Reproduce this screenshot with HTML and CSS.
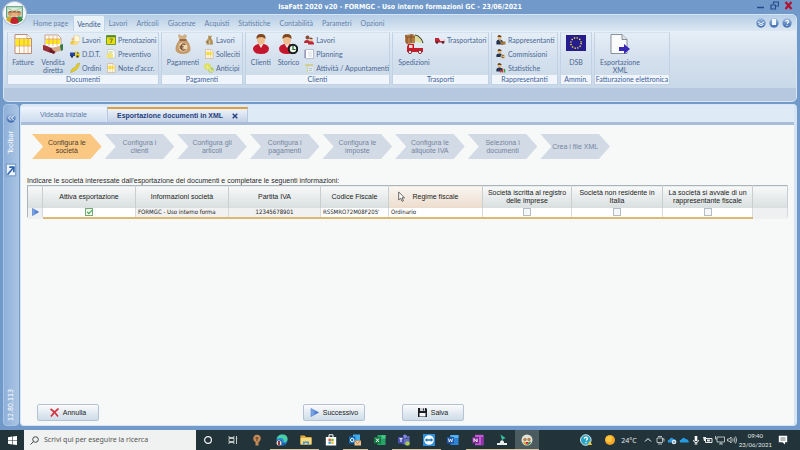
FILE: index.html
```
<!DOCTYPE html>
<html lang="it">
<head>
<meta charset="utf-8">
<title>IsaFatt 2020</title>
<link rel="stylesheet" href="styles.css">
</head>
<body>
<svg class="defs" aria-hidden="true">
  <linearGradient id="gb" x1="0" y1="0" x2="0" y2="1"><stop offset="0" stop-color="#9dbbe2"/><stop offset="1" stop-color="#3c68ad"/></linearGradient>
  <linearGradient id="gp" x1="0" y1="0" x2="1" y2="0"><stop offset="0" stop-color="#8db4f0"/><stop offset="1" stop-color="#2c5fc4"/></linearGradient>
  <symbol id="sheet" viewBox="0 0 18 20"><path d="M1 .5h12l4.500 4V19.500H1z" fill="#fffdf2" stroke="#c08a78"/><path d="M1.500 5h15v7h-15z" fill="#ffe81c"/><path d="M1 4.500h16M1 12h16M5.500 4v15.500M10 4v15.500M14 4v15.500" stroke="#d79b7c" stroke-width=".7"/><path d="M13 .5v4h4.500" fill="#fff" stroke="#b58080" stroke-width=".7"/></symbol>
  <symbol id="hands" viewBox="0 0 20 20"><path d="M2 1h13l3 3v10H2z" fill="#fffdf2" stroke="#c08a78" stroke-width=".8"/><path d="M3 5h14v5H3z" fill="#ffe81c"/><path d="M2 5h16M6 2v10M10 2v10M14 2v10" stroke="#d79b7c" stroke-width=".7"/><path d="M0 11l4 1 4 2 6 3-3 2.500-6-1.500-5-2z" fill="#982f38"/><path d="M20 11l-4 1-6 2-1 2 4 2 7-2z" fill="#d9ac88"/><path d="M17 11l3-1v6l-2 1z" fill="#2d7c41"/><path d="M7 14l5 4-1 2-5-2z" fill="#6d1c24"/></symbol>
  <symbol id="note" viewBox="0 0 10 10"><path d="M1.500 .5h5.500L9 2.500V9.500H1.500z" fill="#fff9df" stroke="#c7a887" stroke-width=".6"/><path d="M2 3h6.500v3H2z" fill="#ffe744"/><path d="M4 1v8M6.500 1v8" stroke="#dba989" stroke-width=".4"/></symbol>
  <symbol id="work" viewBox="0 0 10 10"><path d="M4 0h3.500L10 2.500V7H4z" fill="#fff8d5" stroke="#d9b68a" stroke-width=".6"/><circle cx="3" cy="4" r="1.500" fill="#e9bd8a"/><path d="M.5 9.500V7q2-2.500 5 0v2.500z" fill="#edc438"/><path d="M3 7h5v2.500H3z" fill="#f6db70"/></symbol>
  <symbol id="cal" viewBox="0 0 10 10"><path d="M.5 .5h9v9h-9z" fill="#e9dd13" stroke="#719c30"/><path d="M.5 1.500h9" stroke="#498642" stroke-width="1.500"/><path d="M3.500 4h3L4.500 8" fill="none" stroke="#6e7e1c"/></symbol>
  <symbol id="van" viewBox="0 0 10 10"><path d="M0 3.500h5V7H0z" fill="#2543a4"/><path d="M5 2.500h3L10 5v2.500H5z" fill="#ead224"/><path d="M7 3h1l1.300 1.700H7z" fill="#6679a4"/><circle cx="2" cy="7.500" r="1.200" fill="#222d53"/><circle cx="7.500" cy="7.500" r="1.200" fill="#47451c"/></symbol>
  <symbol id="quote" viewBox="0 0 10 10"><path d="M2 .5h4.500L9 2.500V9H2z" fill="#fff" stroke="#b5b8a6" stroke-width=".6"/><path d="M0 6l4-2.500 3 1.500v4H1z" fill="#f2e27a"/><path d="M3 3h4" stroke="#b3c977"/></symbol>
  <symbol id="pen" viewBox="0 0 10 10"><path d="M.5 9.500L2 6q4-1 5-5l2.500-1L9 3Q7 8 .5 9.500z" fill="#e9cf22" stroke="#b39d20" stroke-width=".5"/></symbol>
  <symbol id="bag" viewBox="0 0 16 20"><path d="M4 0l3 2 3-2 2 2-2 4H5L3 2z" fill="#d0af83"/><path d="M5 5h6q5 6 4.500 11Q14 20 8 20T.5 16Q0 11 5 5z" fill="#c59b6c"/><path d="M4.500 6h7" stroke="#8a5a3c" stroke-width="1.500"/><circle cx="8" cy="13" r="4.500" fill="#ecd8ad"/><path d="M10.500 10.500q-4-2-4.500 2.500t4.500 2.500M4.500 12.200h4M4.500 14h4" fill="none" stroke="#713e2b" stroke-width="1.100"/></symbol>
  <symbol id="bagS" viewBox="0 0 10 10"><path d="M4 .5l2 .5L8 .5 7 3Q9.500 6 9 9.500H2.500Q1.500 6 4.500 3z" fill="#b08c51"/><circle cx="4" cy="7" r="2.500" fill="#d3c18f"/><path d="M5 6H3v2h2" fill="none" stroke="#644427" stroke-width=".7"/></symbol>
  <symbol id="coin" viewBox="0 0 10 10"><circle cx="3.500" cy="3.500" r="3.300" fill="#dbdf59"/><circle cx="7" cy="7" r="2.700" fill="#b4ce62"/><path d="M3 2v3h3v3h3" fill="none" stroke="#f7f2aa"/></symbol>
  <symbol id="person" viewBox="0 0 18 20"><path d="M1 14q1-3 5-4h6q4 1 5 4 0 6-8 6T1 14z" fill="#c4162c"/><path d="M6 9h6l-3 5z" fill="#f8eee6"/><ellipse cx="9" cy="6" rx="4" ry="5" fill="#edbd8d"/><path d="M4.500 5Q4 0 9 0t4.500 5q-2-2-4.500-2T4.500 5z" fill="#80451d"/></symbol>
  <symbol id="clock" viewBox="0 0 20 20"><use href="#person" width="18" height="20"/><circle cx="15" cy="15" r="4.200" fill="#edf4e7" stroke="#151a1b" stroke-width="2"/><path d="M15 12v3.500h2.500" fill="none" stroke="#25672d" stroke-width="1.200"/></symbol>
  <symbol id="people" viewBox="0 0 10 10"><path d="M0 8q0-3 3-3t3 3zM4 9.500q0-3.500 3-3.500t3 3.500z" fill="#bd2535"/><circle cx="3.500" cy="2.500" r="2" fill="#8c4b37"/><circle cx="7" cy="4.700" r="1.800" fill="#e8bc91"/><path d="M5 4q2-3 4 0z" fill="#74402a"/></symbol>
  <symbol id="plan" viewBox="0 0 10 10"><path d="M1.500 .5h8v9h-8z" fill="#fff" stroke="#9daabd" stroke-width=".7"/><path d="M1 1.500v8" stroke="#584c91" stroke-width="1.300" stroke-dasharray="1 1"/><path d="M4 3h4M4 5h4M4 7h4" stroke="#b6c1ce" stroke-width=".6"/></symbol>
  <symbol id="task" viewBox="0 0 10 10"><path d="M1 1h8v2H4v6H3V3H1z" fill="#cfcf98"/><path d="M4 4h5v5H4z" fill="#e1e9ed"/><path d="M5 5.500h3M5 7.500h3" stroke="#9ab4b5" stroke-width=".7"/></symbol>
  <symbol id="crate" viewBox="0 0 20 20"><path d="M1 1l8-1 2 2v7l-8 1-2-2z" fill="#b57b42"/><path d="M1 1l2 2h8M3 3v7M7 0v9" fill="none" stroke="#694226" stroke-width=".7"/><path d="M11 1l3 1q4 3 5 7" fill="none" stroke="#494a29" stroke-width="1.100"/><path d="M11 2l3 1q3 2 4 5l-2 1-5-2z" fill="#dedd98"/><path d="M4 10h6v4h9v4H3v-5z" fill="#c51c2b"/><path d="M5 11h3.500v3H5z" fill="#f8dddd"/><circle cx="6" cy="18" r="1.600" fill="#fff" stroke="#8d3038"/><circle cx="16" cy="18" r="1.600" fill="#fff" stroke="#8d3038"/></symbol>
  <symbol id="truck" viewBox="0 0 10 10"><path d="M0 3h4v1.500h5.500V7.500H0z" fill="#be2635"/><path d="M5 4h4.500v2H5z" fill="#f5dfdf"/><circle cx="2" cy="7.500" r="1.200" fill="#54202c"/><circle cx="8" cy="7.500" r="1.200" fill="#54202c"/></symbol>
  <symbol id="rep" viewBox="0 0 10 10"><circle cx="3.500" cy="2.500" r="2" fill="#e1b77b"/><path d="M1.500 2Q2-.5 4 .3T5.500 2z" fill="#654321"/><path d="M.5 9.500q-1-5 3-5t4 5z" fill="#26334e"/><path d="M3 4.500h1.500v3z" fill="#f2dd83"/><path d="M4.500 6.500h5v3h-5z" fill="#a5733a"/></symbol>
  <symbol id="repc" viewBox="0 0 10 10"><circle cx="3.500" cy="2.500" r="2" fill="#e1b77b"/><path d="M1.500 2Q2-.5 4 .3T5.500 2z" fill="#654321"/><path d="M.5 8q-1-3.500 3-3.500t3 3.500z" fill="#26334e"/><circle cx="7" cy="7.500" r="2.400" fill="#d6c29e"/><path d="M8 6.500H6v2h2" fill="none" stroke="#7c502b" stroke-width=".7"/></symbol>
  <symbol id="reps" viewBox="0 0 10 10"><circle cx="3.500" cy="2.500" r="2" fill="#e1b77b"/><path d="M1.500 2Q2-.5 4 .3T5.500 2z" fill="#654321"/><path d="M.5 8.500q-1-4 3-4t3 4z" fill="#26334e"/><path d="M4.500 9.500V7M6.500 9.500V5.500" stroke="#d13530" stroke-width="1.300"/><path d="M8.500 9.500V6" stroke="#2fa33b" stroke-width="1.500"/></symbol>
  <symbol id="eu" viewBox="0 0 20 20"><path d="M0 1h20v16H0z" fill="#251c8d"/><circle cx="10" cy="9" r="5.200" fill="none" stroke="#f4dc3b" stroke-width="1.500" stroke-dasharray="1.300 1.420"/></symbol>
  <symbol id="export" viewBox="0 0 20 20"><path d="M1 .5h11l5 5V19.500H1z" fill="#fafbfc" stroke="#70777f" stroke-width=".8"/><path d="M12 .5v5h5" fill="#dce2e6" stroke="#70777f" stroke-width=".8"/><path d="M9 13h5v-3l6 5-6 5v-3H9z" fill="#3728b5"/></symbol>
</svg>

<div class="app">
  <header class="titlebar">
    <h1>IsaFatt 2020 v20 - FORMGC - Uso interno formazioni GC - 23/06/2021</h1>
    <div class="winbtns">
      <button aria-label="Riduci a icona"><svg viewBox="0 0 9 9"><path d="M1 6.500h7" stroke="#264a8a" stroke-width="1.500"/></svg></button>
      <button aria-label="Ripristina"><svg viewBox="0 0 9 9"><path d="M3.500 3V1h5v4H6.500M1 4h4.500v4H1z" fill="none" stroke="#264a8a" stroke-width="1.200"/></svg></button>
      <button aria-label="Chiudi"><svg viewBox="0 0 9 9"><path d="M1.500 1l6 7M7.500 1l-6 7" stroke="#b3122f" stroke-width="2.200"/></svg></button>
    </div>
  </header>
  <button class="logo" aria-label="Menu applicazione"><svg viewBox="0 0 24 24"><circle cx="12" cy="12" r="11.500" fill="#f5f8fb" stroke="#aebfce"/><path d="M4.500 5.500h15v10h-15z" fill="#d9eedc" stroke="#489374"/><path d="M6 7l5 3 7-3" fill="none" stroke="#a6cba0"/><circle cx="8" cy="12" r="2.400" fill="#d69a68"/><circle cx="16" cy="12" r="2.400" fill="#d69a68"/><circle cx="12" cy="12" r="2.800" fill="#e6b17d"/><path d="M5.500 11q2.500-3 5 0M13.500 11q2.500-3 5 0M9 11q3-3 6 0" fill="#8b5a3c"/><path d="M4 18q1-4 5-3l2 6q-5 0-7-3z" fill="#d4a928"/><path d="M20 18q-1-4-5-3l-2 6q5 0 7-3z" fill="#388a42"/><path d="M8 21q0-6 4-6t4 6q-4 2-8 0z" fill="#c1222c"/></svg></button>

  <section class="ribbon">
    <nav class="menu">
      <a href="#">Home page</a><a href="#" class="on">Vendite</a><a href="#">Lavori</a><a href="#">Articoli</a><a href="#">Giacenze</a><a href="#">Acquisti</a><a href="#">Statistiche</a><a href="#">Contabilità</a><a href="#">Parametri</a><a href="#">Opzioni</a>
      <div class="helpers">
        <button aria-label="Stile"><svg viewBox="0 0 10 10"><circle cx="5" cy="5" r="4.700" fill="url(#gb)"/><path d="M2 4l3 2 3-2M2.500 6.500q2.500 2 5 0" fill="none" stroke="#fff"/></svg></button>
        <button aria-label="Finestra"><svg viewBox="0 0 10 10"><circle cx="5" cy="5" r="4.700" fill="url(#gb)"/><path d="M3 1h4v6H3z" fill="#f2f7fc"/></svg></button>
        <button aria-label="Aiuto"><svg viewBox="0 0 10 10"><circle cx="5" cy="5" r="4.700" fill="url(#gb)"/><path d="M3.500 3.500Q5 1.500 6.500 3.300 6.500 4.500 5 5.500M5 7v1" fill="none" stroke="#fff" stroke-width="1.200"/></svg></button>
      </div>
    </nav>
    <div class="groups">
      <section class="group g-doc">
        <div class="tools">
          <button class="big"><svg><use href="#sheet"/></svg>Fatture</button>
          <button class="big"><svg><use href="#hands"/></svg>Vendita diretta</button>
          <div class="list narrow">
            <button><svg><use href="#work"/></svg>Lavori</button>
            <button><svg><use href="#van"/></svg>D.D.T.</button>
            <button><svg><use href="#pen"/></svg>Ordini</button>
          </div>
          <div class="list">
            <button><svg><use href="#cal"/></svg>Prenotazioni</button>
            <button><svg><use href="#quote"/></svg>Preventivo</button>
            <button><svg><use href="#note"/></svg>Note d'accr.</button>
          </div>
        </div>
        <h2>Documenti</h2>
      </section>
      <section class="group g-pag">
        <div class="tools">
          <button class="big wide"><svg><use href="#bag"/></svg>Pagamenti</button>
          <div class="list">
            <button><svg><use href="#bagS"/></svg>Lavori</button>
            <button><svg><use href="#note"/></svg>Solleciti</button>
            <button><svg><use href="#coin"/></svg>Anticipi</button>
          </div>
        </div>
        <h2>Pagamenti</h2>
      </section>
      <section class="group g-cli">
        <div class="tools">
          <button class="big"><svg><use href="#person"/></svg>Clienti</button>
          <button class="big"><svg><use href="#clock"/></svg>Storico</button>
          <div class="list">
            <button><svg><use href="#people"/></svg>Lavori</button>
            <button><svg><use href="#plan"/></svg>Planning</button>
            <button><svg><use href="#task"/></svg>Attività / Appuntamenti</button>
          </div>
        </div>
        <h2>Clienti</h2>
      </section>
      <section class="group g-tra">
        <div class="tools">
          <button class="big wide"><svg><use href="#crate"/></svg>Spedizioni</button>
          <div class="list">
            <button><svg><use href="#truck"/></svg>Trasportatori</button>
          </div>
        </div>
        <h2>Trasporti</h2>
      </section>
      <section class="group g-rap">
        <div class="tools">
          <div class="list">
            <button><svg><use href="#rep"/></svg>Rappresentanti</button>
            <button><svg><use href="#repc"/></svg>Commissioni</button>
            <button><svg><use href="#reps"/></svg>Statistiche</button>
          </div>
        </div>
        <h2>Rappresentanti</h2>
      </section>
      <section class="group g-amm">
        <div class="tools">
          <button class="big"><svg><use href="#eu"/></svg>DSB</button>
        </div>
        <h2>Ammin.</h2>
      </section>
      <section class="group g-fat">
        <div class="tools">
          <button class="big xwide"><svg><use href="#export"/></svg>Esportazione XML</button>
        </div>
        <h2>Fatturazione elettronica</h2>
      </section>
    </div>
  </section>

  <div class="workspace">
    <aside class="side">
      <button aria-label="Espandi"><svg viewBox="0 0 10 10"><circle cx="5" cy="5" r="4.700" fill="url(#gb)"/><path d="M5 2.500L2.500 5 5 7.500M8 2.500L5.500 5 8 7.500" fill="none" stroke="#fff"/></svg></button>
      <span class="vert">Toolbar</span>
      <button class="pin" aria-label="Sgancia"><svg viewBox="0 0 10 12"><path d="M1 1h8v10H1z" fill="#eef5fc" stroke="#7ca0cc"/><path d="M2 10l5-6M3.500 3.500H7.500V8" fill="none" stroke="#2f66ac" stroke-width="1.400"/></svg></button>
      <span class="vert version">12.80.113</span>
    </aside>
    <main>
      <div class="tabs">
        <button>Videata iniziale</button>
        <button class="on">Esportazione documenti in XML <svg viewBox="0 0 6 6"><path d="M.7 .7l4.600 4.600M5.300 .7L.7 5.300" stroke="#263f7c" stroke-width="1.400"/></svg></button>
      </div>
      <div class="page">
        <ol class="steps">
          <li class="on">Configura le società</li>
          <li>Configura i clienti</li>
          <li>Configura gli articoli</li>
          <li>Configura i pagamenti</li>
          <li>Configura le imposte</li>
          <li>Configura le aliquote IVA</li>
          <li>Seleziona i documenti</li>
          <li>Crea i file XML</li>
        </ol>
        <p>Indicare le società interessate dall'esportazione dei documenti e completare le seguenti informazioni:</p>
        <table>
          <colgroup><col class="c-mark"><col class="c-act"><col class="c-info"><col class="c-iva"><col class="c-cf"><col class="c-reg"><col class="c-imp"><col class="c-res"><col class="c-rap"><col class="c-end"></colgroup>
          <thead>
            <tr>
              <th></th><th>Attiva esportazione</th><th>Informazioni società</th><th>Partita IVA</th><th>Codice Fiscale</th>
              <th class="hot">Regime fiscale<svg class="cursor" viewBox="0 0 7 11"><path d="M.7 1v8l2-1.800L4 10.300l1.400-.6L4 6.800h2.500z" fill="#fff" stroke="#444" stroke-width=".8"/></svg></th>
              <th>Società iscritta al registro delle imprese</th><th>Società non residente in Italia</th><th>La società si avvale di un rappresentante fiscale</th><th></th>
            </tr>
          </thead>
          <tbody>
            <tr>
              <td class="mark"><svg viewBox="0 0 7 8"><path d="M.5 .5L6.500 4l-6 3.500z" fill="url(#gp)" stroke="#3e6cc2" stroke-width=".6"/></svg></td>
              <td><input type="checkbox" checked aria-label="Attiva esportazione"></td>
              <td class="grey left">FORMGC - Uso interno forma</td>
              <td class="grey">12345678901</td>
              <td class="left">RSSMRO72M08F205'</td>
              <td class="left">Ordinario</td>
              <td><input type="checkbox" aria-label="Iscritta al registro delle imprese"></td>
              <td><input type="checkbox" aria-label="Non residente in Italia"></td>
              <td><input type="checkbox" aria-label="Rappresentante fiscale"></td>
              <td class="end"></td>
            </tr>
          </tbody>
        </table>
        <div class="actions">
          <button><svg viewBox="0 0 9 9"><path d="M.5 1Q4 3 8 8.500M8.500 .5Q4 4 1 8.500" fill="none" stroke="#d2303f" stroke-width="1.600"/></svg>Annulla</button>
          <button class="next"><svg viewBox="0 0 9 9"><path d="M1 .5L8.500 4.500 1 8.500z" fill="url(#gp)" stroke="#4a76c6" stroke-width=".6"/></svg>Successivo</button>
          <button class="save"><svg viewBox="0 0 9 9"><path d="M0 0h8l1 1v8H0z" fill="#1b1d20"/><path d="M2 0h5v3H2z" fill="#cfd4d8"/><path d="M1.500 5h6v3.500h-6z" fill="#f4f5f6"/><path d="M5 .5h1v2H5z" fill="#222"/></svg>Salva</button>
        </div>
      </div>
    </main>
  </div>
</div>

<footer class="taskbar">
  <button class="start" aria-label="Start"><svg viewBox="0 0 9 9"><path d="M0 1.200l4-.6v3.600H0zM4.600 .5L9 0v4.200H4.600zM0 4.800h4v3.600l-4-.6zM4.600 4.800H9V9l-4.400-.5z" fill="#fff"/></svg></button>
  <label class="search"><svg viewBox="0 0 9 9"><circle cx="5.500" cy="3.500" r="2.800" fill="none" stroke="#444"/><path d="M3.500 5.500L.6 8.500" stroke="#444"/></svg><input type="text" placeholder="Scrivi qui per eseguire la ricerca" aria-label="Ricerca"></label>
  <div class="apps">
    <button aria-label="Cortana"><svg viewBox="0 0 12 12"><circle cx="6" cy="6" r="3.400" fill="none" stroke="#eef2f2" stroke-width="1.200"/></svg></button>
    <button aria-label="Visualizzazione attività"><svg viewBox="0 0 12 12"><path d="M2 2v1.500h5V2M2 10V8.500h5V10M2 4.500h5v3H2zM9.500 2v8M8.800 4.500h1.500" fill="none" stroke="#cfd6d6" stroke-width=".9"/></svg></button>
    <button aria-label="Suggerimenti"><svg viewBox="0 0 12 12"><circle cx="6" cy="4.500" r="3.700" fill="#c28a58"/><path d="M4.500 7h3v4.500h-3z" fill="#c28a58"/><path d="M6 3v4M4.500 4h3" stroke="#684326" stroke-width="1.100"/></svg></button>
    <button class="run" aria-label="Edge"><svg viewBox="0 0 12 12"><circle cx="6" cy="6" r="5.500" fill="#2789d5"/><path d="M.5 6Q1 .5 6.500 .5T11.500 6q-1 2.500-4 2 1-4-3-4T.5 6z" fill="#48cfa2"/><path d="M5 6q-1 4 5 4.500" fill="none" stroke="#185b9b" stroke-width="1.500"/><circle cx="3" cy="9" r="2.500" fill="#e9d8d2"/><path d="M2 7h2v4H2z" fill="#9c3542"/></svg></button>
    <button class="run" aria-label="Esplora file"><svg viewBox="0 0 12 12"><path d="M.5 1.500h4L6 3h5.500v7.500H.5z" fill="#e2ad3c"/><path d="M.5 4h11v6.500H.5z" fill="#fad979"/><path d="M3 7.500h6v3H7.500V9h-3v1.500H3z" fill="#4993cf"/></svg></button>
    <button aria-label="Store"><svg viewBox="0 0 12 12"><path d="M4 3V.8h4V3" fill="none" stroke="#fff"/><path d="M.8 3h10.400v8.500H.8z" fill="#fff"/><path d="M3.500 4.700h2.300V7H3.500z" fill="#ea4a2c"/><path d="M6.300 4.700h2.300V7H6.300z" fill="#75b72a"/><path d="M3.500 7.500h2.300v2.300H3.500z" fill="#279fdd"/><path d="M6.300 7.500h2.300v2.300H6.300z" fill="#f6b815"/></svg></button>
    <button class="run" aria-label="Outlook"><svg viewBox="0 0 12 12"><path d="M4 .5h7v6H4z" fill="#42adec"/><path d="M0 2.500h6.500v7H0z" fill="#1169ba"/><circle cx="3.200" cy="6" r="1.700" fill="none" stroke="#fff"/><path d="M5.500 6.500H12v5H5.500z" fill="#f0c493"/><path d="M5.500 6.500l3.200 3 3.300-3" fill="none" stroke="#b06e37" stroke-width=".7"/></svg></button>
    <button aria-label="Excel"><svg viewBox="0 0 12 12"><path d="M3.500 1h8v10h-8z" fill="#27a365"/><path d="M7.500 1h4v3.500h-4z" fill="#45c487"/><path d="M0 3h7v6.500H0z" fill="#107a40"/><path d="M2 4.500l3 3.500M5 4.500L2 8" stroke="#fff"/></svg></button>
    <button class="run" aria-label="Teams"><svg viewBox="0 0 12 12"><circle cx="7" cy="2.500" r="2" fill="#8187dc"/><circle cx="10.300" cy="3.200" r="1.300" fill="#6c70c8"/><path d="M4 4.500h7.500V9Q8 13 4 9z" fill="#656bc6"/><path d="M0 3h6v6.500H0z" fill="#484fb1"/><path d="M1.500 4.700h3M3 4.700V8" stroke="#fff"/><circle cx="9.500" cy="9.500" r="2.300" fill="#a9c753"/></svg></button>
    <button class="run" aria-label="TeamViewer"><svg viewBox="0 0 12 12"><path d="M0 0h12v12H0z" fill="#2c91df"/><circle cx="6" cy="6" r="4.800" fill="#fff"/><path d="M1.800 6l2.500-2v1.200h3.400V4l2.500 2-2.500 2V6.800H4.300V8z" fill="#1a75c4"/></svg></button>
    <button aria-label="Word"><svg viewBox="0 0 12 12"><path d="M3.500 1h8v10h-8z" fill="#2f83d4"/><path d="M3.500 1h8v3h-8z" fill="#53b2ef"/><path d="M0 3h7v6.500H0z" fill="#1e57ae"/><path d="M1.300 4.500l1 3.500 1.200-3 1.200 3 1-3.500" fill="none" stroke="#fff" stroke-width=".8"/></svg></button>
    <button class="run" aria-label="OneNote"><svg viewBox="0 0 12 12"><path d="M3 .8h8.500v10.400H3z" fill="#c35ad5"/><path d="M9 3h2.500v8.200H9z" fill="#9332a6"/><path d="M0 3h7v6.500H0z" fill="#78288d"/><path d="M2 8V4.500L5 8V4.500" fill="none" stroke="#fff"/></svg></button>
    <button class="run" aria-label="Registratore"><svg viewBox="0 0 12 12"><path d="M4.500 .5L9.500 4 6 6z" fill="#31c3a4"/><path d="M4 7.500L6 6l2 1.500v1.500h3V11H1V9h3z" fill="#e8efee"/></svg></button>
    <button class="run active" aria-label="IsaFatt"><svg viewBox="0 0 12 12"><circle cx="6" cy="6" r="5.500" fill="#dfe5d8"/><circle cx="4" cy="5.500" r="1.700" fill="#b97e50"/><circle cx="8" cy="5.500" r="1.700" fill="#b97e50"/><path d="M2 8q2-2 4 3Q3 11 2 8z" fill="#cda928"/><path d="M10 8Q8 6 6 11q3 0 4-3z" fill="#3d8b44"/><path d="M4.500 8h3L6 11z" fill="#c32432"/></svg></button>
  </div>
  <div class="tray">
    <button class="t-help" aria-label="Guida"><svg viewBox="0 0 12 12"><circle cx="5.800" cy="6" r="5.300" fill="#28a3c3" stroke="#e9f4f6" stroke-width=".9"/><path d="M4 4.500Q6 2 7.500 4.300 7.500 5.500 6 6.500M6 8v1.300" fill="none" stroke="#fff" stroke-width="1.300"/><path d="M8 11l1-3.500h1.500L12 11z" fill="#e8c545"/></svg></button>
    <button class="weather"><svg viewBox="0 0 12 12"><circle cx="6" cy="6" r="5" fill="#f5a629"/><circle cx="5" cy="5" r="3.300" fill="#ffc640"/></svg>24°C</button>
    <div class="status">
      <button aria-label="Mostra icone nascoste"><svg viewBox="0 0 10 10"><path d="M2 6.500l3-3 3 3" fill="none" stroke="#fff"/></svg></button>
      <button aria-label="Riunione"><svg viewBox="0 0 10 10"><path d="M2 3h5.500v4.500H2zM3 1.500h4M3 9h4M7.500 4.500L9 3.500v3" fill="none" stroke="#d7dddd" stroke-width=".8"/></svg></button>
      <button aria-label="OneDrive personale"><svg viewBox="0 0 10 10"><path d="M1 7.500Q0 5 2.500 4.500 4 1.500 6.500 4 9.500 4 9.500 7.500z" fill="#2e9add"/><circle cx="7" cy="7" r="2.300" fill="#dce7ee"/><path d="M6 7h2" stroke="#286caa"/></svg></button>
      <button aria-label="OneDrive"><svg viewBox="0 0 10 10"><path d="M1 7.500Q0 5 2.500 4.500 4 1.500 6.500 4 9.800 4 9.800 7.500z" fill="#249de3"/></svg></button>
      <button aria-label="Microfono"><svg viewBox="0 0 10 10"><path d="M3.700 1h2.600v5H3.700z" fill="#fff"/><path d="M2.500 5q0 2.500 2.500 2.500T7.500 5M5 7v2M3.500 9h3" fill="none" stroke="#fff" stroke-width=".9"/></svg></button>
      <button aria-label="Batteria"><svg viewBox="0 0 10 10"><path d="M2.500 3.500H9v4H2.500z" fill="none" stroke="#e6eaea"/><path d="M4 4.500h3v2H4zM0 2h3v4H1z" fill="#e6eaea"/></svg></button>
      <button aria-label="Rete"><svg viewBox="0 0 10 10"><path d="M2 2h7.500v5H2zM4 9h4M6 7v2M.5 1v3h1.500" fill="none" stroke="#d7dddd" stroke-width=".8"/></svg></button>
      <button aria-label="Volume"><svg viewBox="0 0 10 10"><path d="M.5 4h1.500l2-2v6L2 6H.5zM5.500 3.500q1.500 1.500 0 3M7 2.500q2 2.500 0 5M8.500 1.500q2.500 3.500 0 7" fill="none" stroke="#d7dddd" stroke-width=".8"/></svg></button>
    </div>
    <time>09:40<br>23/06/2021</time>
    <button class="notes" aria-label="Notifiche"><svg viewBox="0 0 10 10"><path d="M.8 .8h8.400v6.400H7v2.300L4.500 7.200H.8z" fill="#fff"/><path d="M2.500 3h5M2.500 5h5" stroke="#4a5759" stroke-width=".8"/></svg></button>
  </div>
</footer>
</body>
</html>
```
FILE: styles.css
```
:root {
  --ui: Lato, "Open Sans", sans-serif;
  --search: "Noto Sans", "Open Sans", sans-serif;
  --title: "DejaVu Sans Condensed", "DejaVu Sans", sans-serif;
  --form: "Liberation Sans", sans-serif;
  --blue: #7199ca;
  --ink: #4b6893;
}
* { box-sizing: border-box; }
body {
  margin: 0;
  min-height: 100vh;
  display: flex;
  flex-direction: column;
  background: var(--blue);
  font: 7px/8px var(--ui);
  color: var(--ink);
}
button { border: 0; padding: 0; background: none; font: inherit; color: inherit; }
a { color: inherit; text-decoration: none; }
h1, h2, p, ol { margin: 0; padding: 0; }
svg { display: block; flex: none; }
.defs { position: absolute; width: 0; height: 0; }

.app { flex: 1; display: flex; flex-direction: column; position: relative; padding: 0 3px 4px; }

.titlebar { position: relative; height: 14px; display: flex; align-items: center; justify-content: center; }
.titlebar h1 { font: bold 7px/14px var(--title); color: #fff; }
.winbtns { position: absolute; right: 4px; top: 1px; display: flex; gap: 5px; }
.winbtns svg { width: 9px; height: 9px; }
.logo { position: absolute; left: 2px; top: 1px; z-index: 1; }
.logo svg { width: 25px; height: 25px; }

.ribbon { background: #b5c8df; border: 1px solid #d5e5f5; border-radius: 5px; padding-bottom: 13px; }
.menu {
  display: flex;
  align-items: stretch;
  height: 16px;
  padding-left: 25px;
  border-radius: 4px 4px 0 0;
  background: linear-gradient(#b6cee6, #dce8f3);
  color: #6481a9;
}
.menu a { padding: 0 5px 0 4px; line-height: 16px; }
.menu .on { background: #e8f0f8; border: 1px solid #bfd1e6; border-bottom: 0; border-radius: 2px 2px 0 0; padding: 0 3px; color: #3b5a8d; }
.helpers { display: flex; gap: 3px; align-items: center; margin-left: auto; padding-right: 4px; }
.helpers svg { width: 10px; height: 10px; }
.groups {
  display: flex;
  gap: 2px;
  padding: 1px 3px 3px;
  background: linear-gradient(#e6eff8, #d4e0ed 50%, #c9d8e8);
}
.group { display: flex; flex-direction: column; height: 53px; border: 1px solid #c1d2e4; border-top-color: #d4e1ee; }
.group h2 { font: inherit; line-height: 9px; height: 9px; text-align: center; background: #f0f5fc; color: #40639c; white-space: nowrap; }
.tools { flex: 1; display: flex; }
.g-doc { width: 152px; }
.g-pag { width: 82px; }
.g-cli { width: 145px; }
.g-cli .tools { padding-left: 1px; }
.g-tra { width: 97px; }
.g-rap { width: 67px; }
.g-amm { width: 32px; }
.g-fat { width: 76px; }
.big { width: 30px; display: flex; flex-direction: column; align-items: center; gap: 4px; padding-top: 1px; line-height: 8px; align-self: flex-start; }
.big svg { width: 20px; height: 20px; }
.big.wide { width: 42px; }
.big.xwide { width: 50px; padding: 1px 4px 0; }
.list { display: flex; flex-direction: column; padding-left: 2px; }
.list.narrow { width: 36px; }
.wide + .list { padding-left: 0; }
.list button { display: flex; align-items: center; gap: 2px; height: 14px; white-space: nowrap; }
.list svg { width: 10px; height: 10px; }
.g-rap .list { padding-left: 4px; }

.workspace { flex: 1; display: flex; gap: 1px; margin-top: 2px; }
.side {
  width: 16px;
  display: flex;
  flex-direction: column;
  align-items: center;
  padding: 8px 0 4px;
  border: 1px solid #a9c5e6;
  border-radius: 4px;
  background: linear-gradient(90deg, #8fb0d9, #a9c4e3);
  color: #fff;
}
.side svg { width: 10px; height: 10px; }
.vert { writing-mode: vertical-rl; transform: rotate(180deg); font: 7px/10px var(--title); margin-top: 8px; }
.side .pin { margin-top: 9px; }
.side .pin svg { width: 12px; height: 14px; }
.side .version { margin-top: auto; }

main {
  flex: 1;
  min-width: 0;
  display: flex;
  flex-direction: column;
  border: 1px solid #d5e5f5;
  border-right-width: 3px;
  border-radius: 4px;
  background: #f7f8f8;
  font: 7px/8px var(--form);
}
.tabs { display: flex; gap: 1px; padding-top: 2px; background: #dfeaf7; border-bottom: 3px solid #a9bcda; }
.tabs button { height: 15px; padding: 0 19px; background: linear-gradient(#f0f5fb, #ccdcef); color: #5c79a8; }
.tabs .on { display: flex; align-items: center; gap: 9px; padding: 0 9px; border: 1px solid #b7c8e0; border-top: 2px solid #dda03e; border-bottom: 0; background: linear-gradient(#eef3fa, #c3d1e6); color: #263f7c; font-weight: bold; }
.tabs svg { width: 6px; height: 6px; }

.page { flex: 1; display: flex; flex-direction: column; padding: 9px 7px 4px 6px; }
.steps { display: grid; grid-template-columns: repeat(8, 1fr); gap: 3px; width: 578px; margin-left: 5px; list-style: none; }
.steps li {
  display: flex;
  align-items: center;
  justify-content: center;
  height: 25px;
  padding: 0 9px;
  text-align: center;
  background: #d2dae5;
  color: #7485a0;
  clip-path: polygon(0 0, 84% 0, 100% 50%, 84% 100%, 0 100%, 16% 50%);
}
.steps .on { background: #fbc883; color: #4b3c2b; }
.page p { margin-top: 18px; color: #2a2a2a; }

table { width: 100%; table-layout: fixed; border-collapse: collapse; border: 1px solid #a9b4bc; color: #222; }
.c-mark { width: 15px; }
.c-act, .c-info { width: 93px; }
.c-iva { width: 92px; }
.c-cf { width: 68px; }
.c-reg { width: 94px; }
.c-imp { width: 89px; }
.c-res { width: 91px; }
.c-rap { width: 90px; }
.c-end { width: 35px; }
th { position: relative; height: 22px; padding: 0 4px; font-weight: normal; border-right: 1px solid #c9cfd1; background: linear-gradient(#f8f9f9, #d8dedf); }
th.hot { background: linear-gradient(#faf6f2, #ecdccc); }
.cursor { position: absolute; left: 9px; top: 5px; width: 7px; height: 11px; }
td { height: 10px; padding: 0 2px; font: 6px/8px var(--title); text-align: center; white-space: nowrap; background: #fff; border-right: 1px solid #d7dadc; border-bottom: 2px solid #dcb970; }
td.grey { background: #f1f1f1; }
td.left { text-align: left; }
td.mark, td.end { background: #eef0f1; border-bottom-color: #eef0f1; }
.mark svg { width: 7px; height: 8px; margin: 0 auto; }
td input { appearance: none; display: block; width: 8px; height: 8px; margin: 0 auto; border: 1px solid #b6bcc6; background: #f6f7f8; }
td input:checked { border-color: #75a977; background: #fff linear-gradient(#eaf5e9, #fff); }
td input:checked::after { content: ""; display: block; width: 4px; height: 2px; margin: 1px; border: solid #33a640; border-width: 0 0 1px 1px; transform: rotate(-45deg); }

.actions { display: flex; margin-top: auto; padding-left: 10px; }
.actions button {
  display: flex;
  align-items: center;
  justify-content: center;
  gap: 4px;
  width: 62px;
  height: 17px;
  border: 1px solid #b3c3d4;
  border-radius: 2px;
  background: linear-gradient(#fbfcfd, #dfe8ef 60%, #d0dde8);
  color: #222;
}
.actions svg { width: 9px; height: 9px; }
.actions .next { margin-left: 204px; }
.actions .save { margin-left: 37px; }

.taskbar { display: flex; height: 20px; background: #22343a; color: #e6eaea; }
.start { width: 24px; display: grid; place-items: center; }
.start svg { width: 9px; height: 9px; }
.search { width: 172px; display: flex; align-items: center; gap: 5px; padding-left: 6px; background: #f0f1f1; }
.search svg { width: 9px; height: 9px; }
.search input { flex: 1; min-width: 0; padding: 0; border: 0; background: none; font: 7px/10px var(--search); color: #333; }
.search input::placeholder { color: #555; opacity: 1; }
.apps { width: 343px; display: grid; grid-template-columns: repeat(14, 1fr); }
.apps button { display: grid; place-items: center; border-bottom: 1px solid transparent; }
.apps svg { width: 12px; height: 12px; }
.apps .run { border-bottom-color: #d9c39a; background-clip: padding-box; }
.apps .active { background: #4c5b60; }
.tray { margin-left: auto; display: flex; align-items: center; font: 6px/9px var(--search); }
.tray svg { width: 10px; height: 10px; }
.t-help { margin-right: 12px; }
.weather { display: flex; align-items: center; gap: 5px; font-size: 7px; }
.t-help svg, .weather svg { width: 12px; height: 12px; }
.status { display: flex; gap: 2px; margin-left: 6px; }
.tray time { margin-left: 2px; text-align: center; font-family: var(--ui); }
.notes { margin: 0 12px 0 6px; }
```
